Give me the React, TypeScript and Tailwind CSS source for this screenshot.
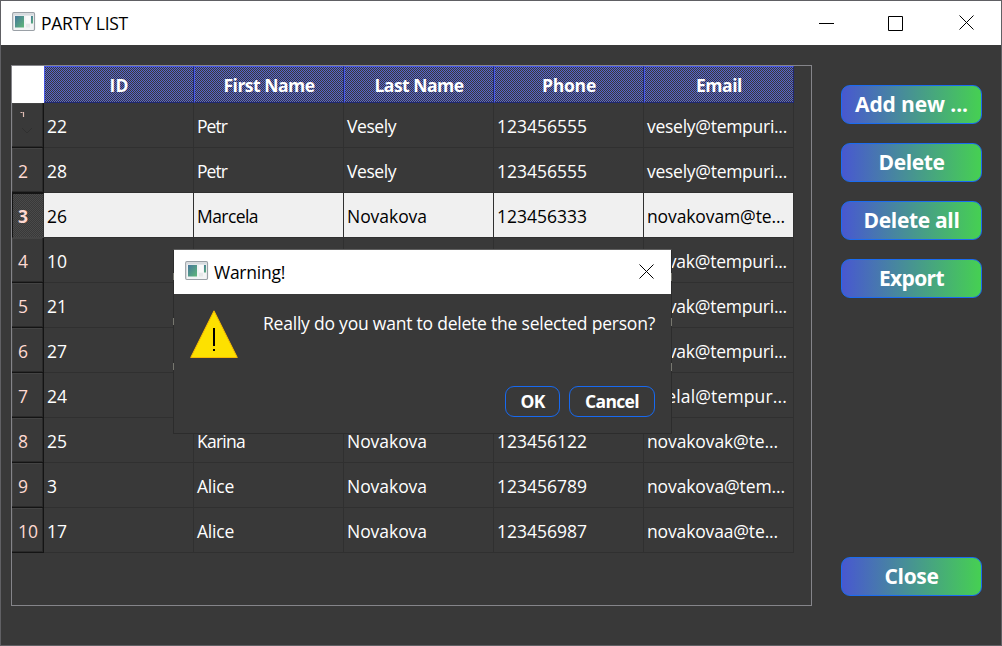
import React, { useLayoutEffect, useRef } from "react";

type Person = { id: string; first: string; last: string; phone: string; email: string };

const people: Person[] = [
  { id: "22", first: "Petr", last: "Vesely", phone: "123456555", email: "vesely@tempuri..." },
  { id: "28", first: "Petr", last: "Vesely", phone: "123456555", email: "vesely@tempuri..." },
  { id: "26", first: "Marcela", last: "Novakova", phone: "123456333", email: "novakovam@te..." },
  { id: "10", first: "", last: "", phone: "", email: "novak@tempuri..." },
  { id: "21", first: "", last: "", phone: "", email: "novak@tempuri..." },
  { id: "27", first: "", last: "", phone: "", email: "novak@tempuri..." },
  { id: "24", first: "", last: "", phone: "", email: "dselal@tempur..." },
  { id: "25", first: "Karina", last: "Novakova", phone: "123456122", email: "novakovak@te..." },
  { id: "3", first: "Alice", last: "Novakova", phone: "123456789", email: "novakova@tem..." },
  { id: "17", first: "Alice", last: "Novakova", phone: "123456987", email: "novakovaa@te..." },
];

const widths: Record<string, number> = {
  "PARTY LIST": 87, "Warning!": 71, ID: 19, "First Name": 91, "Last Name": 89, Phone: 54, Email: 46,
  Petr: 30, Vesely: 49, Marcela: 61, Novakova: 80, Karina: 48, Alice: 37,
  "123456555": 90, "123456333": 90, "123456122": 90, "123456789": 90, "123456987": 90,
  "vesely@tempuri...": 140, "novakovam@te...": 138, "novak@tempuri...": 140, "dselal@tempur...": 140,
  "novakovak@te...": 131, "novakova@tem...": 138, "novakovaa@te...": 131,
  "Really do you want to delete the selected person?": 392, OK: 24, Cancel: 54,
  "Add new ...": 113, Delete: 66, "Delete all": 96, Export: 65, Close: 54,
  "10": 20, "17": 20, "21": 20, "22": 20, "24": 20, "25": 20, "26": 20, "27": 20, "28": 20,
};

/** Text whose letter spacing is tuned so that the run takes a known width. */
function Fit({ children, className = "" }: { children: string; className?: string }) {
  const ref = useRef<HTMLSpanElement>(null);
  useLayoutEffect(() => {
    const el = ref.current;
    const want = widths[children];
    if (!el || !want) return;
    el.style.letterSpacing = "0px";
    const gap = (want - el.getBoundingClientRect().width) / children.length;
    el.style.letterSpacing = `${gap}px`;
  }, [children]);
  return <span ref={ref} className={`inline-block whitespace-pre ${className}`}>{children}</span>;
}

function AppIcon() {
  return (
    <svg width="24" height="20" viewBox="0 0 24 20" className="shrink-0">
      <defs>
        <linearGradient id="pane" x1="0" y1="0" x2="1" y2="1">
          <stop offset="0" stopColor="#46769c" />
          <stop offset="1" stopColor="#5fb878" />
        </linearGradient>
      </defs>
      <rect x="0.7" y="0.7" width="21.8" height="17.8" rx="1.2" fill="#f3f4f5" stroke="#9aa0a6" strokeWidth="1.2" />
      <rect x="1.5" y="1.5" width="20" height="2" fill="#d5dade" />
      <rect x="3" y="4" width="9" height="11.5" fill="url(#pane)" />
      <rect x="14" y="4" width="4" height="7" fill="#fafafa" />
      <rect x="14" y="12" width="4" height="3.5" fill="#e6e8e9" />
      <rect x="19" y="4" width="2" height="7.5" fill="url(#pane)" />
    </svg>
  );
}

function CloseIcon() {
  return (
    <svg width="16" height="16" viewBox="0 0 16 16" fill="none" stroke="#000" strokeWidth="1">
      <path d="M.5.5l14 14M14.5.5l-14 14" />
    </svg>
  );
}

function Checker({ id, color }: { id: string; color: string }) {
  return (
    <svg width="100%" height="100%" className="absolute inset-0" shapeRendering="crispEdges">
      <defs>
        <pattern id={id} width="2" height="2" patternUnits="userSpaceOnUse">
          <rect x="1" width="1" height="1" fill={color} />
          <rect y="1" width="1" height="1" fill={color} />
        </pattern>
      </defs>
      <rect width="100%" height="100%" fill={`url(#${id})`} />
    </svg>
  );
}

function SideButton({ label }: { label: string }) {
  return (
    <button className="flex h-[39px] w-[141px] items-center justify-center rounded-[9px] border border-[#1b6cf0] bg-[linear-gradient(90deg,#4858d0,#46d052)] pb-px text-[21px] font-bold text-white">
      <Fit>{label}</Fit>
    </button>
  );
}

const cell = "flex w-[150px] items-center overflow-hidden border-r border-b pl-[3px] pt-[3px]";

export default function App() {
  return (
    <div className="relative flex h-[646px] w-[1002px] flex-col overflow-hidden border border-[#606064] bg-[#393939] font-['Open_Sans','Noto_Sans',sans-serif] text-[17.5px] leading-none text-white">
      <div className="absolute top-[38px] -left-px h-[607px] w-px bg-[linear-gradient(180deg,#242428_0_21px,#30367a_21px_57px,#282a34_57px_197px,#606064_197px_243px,#2a2a2e_243px)]" />
      <header className="flex h-[44px] shrink-0 items-center bg-white text-black">
        <div className="-mt-0.5 ml-[11px] flex"><AppIcon /></div>
        <Fit className="ml-[5px] mt-px">PARTY LIST</Fit>
        <div className="ml-auto mr-[26px] flex items-center">
          <svg width="15" height="15" viewBox="0 0 15 15"><path d="M0 7.5h15" stroke="#000" /></svg>
          <svg width="15" height="15" viewBox="0 0 15 15" className="ml-[54px]"><path d="M.5.5h14v14h-14z" fill="none" stroke="#000" /></svg>
          <div className="ml-[56px]"><CloseIcon /></div>
        </div>
      </header>

      <div className="flex flex-1 pt-5 pl-2.5">
        <main className="h-[541px] w-[801px] border border-[#85858a]">
          <div className="flex h-[37px]">
            <div className="w-[32px] bg-white" />
            {["ID", "First Name", "Last Name", "Phone", "Email"].map((h, i) => (
              <div key={h} className="relative flex w-[150px] items-center justify-center border-t border-r border-b border-l border-t-[#4757e6] border-r-[#20286e] border-b-[#20286e] border-l-[#4757e6] font-bold">
                <Checker id={`head${i}`} color="#5563d2" />
                <Fit className="relative mt-0.5">{h}</Fit>
              </div>
            ))}
          </div>
          {people.map((p, i) => {
            const selected = i === 2;
            return (
              <div key={p.id} className="flex h-[45px]">
                <div className={`relative flex w-[32px] items-center border-r border-b pl-1.5 pt-[3px] text-[#ffd9d2] ${selected ? "border-t border-l border-t-[#141414] border-r-[#303030] border-b-[#454545] border-l-[#141414] pl-[5px] font-bold" : "border-[#141414] shadow-[inset_-1px_-1px_0_#2a2a2a,inset_1px_1px_0_#444]"}`}>
                  {selected && <Checker id="rowhead" color="#4a4a4a" />}
                  {i === 0 ? (
                    <svg width="22" height="38" viewBox="0 0 22 38" fill="none">
                      <path d="M2.5 4.5h2M5.5 4v5" stroke="#e0bdb4" strokeWidth="1.2" />
                      <path d="M4 20l5 5 5-5" stroke="#303030" />
                    </svg>
                  ) : (
                    <span className="relative">{i + 1}</span>
                  )}
                </div>
                {[p.id, p.first, p.last, p.phone, p.email].map((v, c) => (
                  <div key={c} className={`${cell} ${selected ? "border-[#303030] bg-[#f0f0f0] text-black" : "border-[#303030]"}`}>
                    <Fit>{v}</Fit>
                  </div>
                ))}
              </div>
            );
          })}
        </main>
        <aside className="ml-[29px] flex h-[531px] flex-col gap-[19px] pt-5">
          <SideButton label="Add new ..." />
          <SideButton label="Delete" />
          <SideButton label="Delete all" />
          <SideButton label="Export" />
          <div className="mt-auto"><SideButton label="Close" /></div>
        </aside>
      </div>

      <section className="absolute left-[172px] top-[248px] flex h-[185px] w-[499px] flex-col border border-[#2c2c2c] border-t-[#606060] bg-[#393939]">
        <div className="flex h-[44px] items-center bg-white text-black">
          <div className="-mt-0.5 ml-[11px] flex"><AppIcon /></div>
          <Fit className="ml-[5px] mt-px">Warning!</Fit>
          <div className="ml-auto mr-[16px]"><CloseIcon /></div>
        </div>
        <div className="flex pl-4 pt-4">
          <svg width="48" height="48" viewBox="0 0 48 48">
            <path d="M24 .8L47.3 47.5H.7z" fill="#fde100" stroke="#f8b800" />
            <path d="M24 18v18M24 39v2" stroke="#000" strokeWidth="2" />
          </svg>
          <Fit className="ml-[25px] mt-[5px]">Really do you want to delete the selected person?</Fit>
        </div>
        <div className="mt-auto mr-[16px] mb-4 flex justify-end gap-[9px] font-bold">
          <button className="h-[31px] w-[55px] rounded-[9px] border border-[#1769f0]"><Fit>OK</Fit></button>
          <button className="h-[31px] w-[86px] rounded-[9px] border border-[#1769f0]"><Fit>Cancel</Fit></button>
        </div>
        {[23, 68, 113].map((y) => (
          <React.Fragment key={y}>
            <div className="absolute -left-px h-[7px] w-px bg-[#77776f]" style={{ top: y }} />
            <div className="absolute -right-px h-[8px] w-px bg-[#77776f]" style={{ top: y }} />
          </React.Fragment>
        ))}
      </section>
    </div>
  );
}
